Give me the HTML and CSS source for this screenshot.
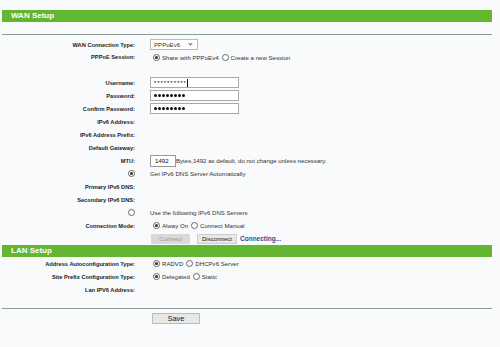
FILE: index.html
```html
<!DOCTYPE html>
<html>
<head>
<meta charset="UTF-8">
<title>WAN Setup</title>
<link rel="stylesheet" href="styles.css">
</head>
<body>
<div class="page">
  <!-- WAN -->
  <div class="bar">WAN Setup</div>
  <div class="rule top"></div>
  <div class="form">
    <div class="row"><div class="lbl">WAN Connection Type:</div><div class="val"><span class="select">PPPoEv6<i class="chev"></i></span></div></div>
    <div class="row short"><div class="lbl">PPPoE Session:</div><div class="val"><span class="radio on"></span>Share with PPPoEv4 <span class="radio"></span>Create a new Session</div></div>
    <div class="row"></div>
    <div class="row"><div class="lbl">Username:</div><div class="val"><span class="field stars">**********<b class="caret"></b></span></div></div>
    <div class="row"><div class="lbl">Password:</div><div class="val"><span class="field"><i class="dot"></i><i class="dot"></i><i class="dot"></i><i class="dot"></i><i class="dot"></i><i class="dot"></i><i class="dot"></i><i class="dot"></i></span></div></div>
    <div class="row"><div class="lbl">Confirm Password:</div><div class="val"><span class="field"><i class="dot"></i><i class="dot"></i><i class="dot"></i><i class="dot"></i><i class="dot"></i><i class="dot"></i><i class="dot"></i><i class="dot"></i></span></div></div>
    <div class="row"><div class="lbl">IPv6 Address:</div><div class="val"></div></div>
    <div class="row"><div class="lbl">IPv6 Address Prefix:</div><div class="val"></div></div>
    <div class="row"><div class="lbl">Default Gateway:</div><div class="val"></div></div>
    <div class="row"><div class="lbl">MTU:</div><div class="val"><span class="field mtu">1492</span>Bytes,1492 as default, do not change unless necessary.</div></div>
    <div class="row"><div class="lbl"><span class="radio on"></span></div><div class="val">Get IPv6 DNS Server Automatically</div></div>
    <div class="row"><div class="lbl">Primary IPv6 DNS:</div><div class="val"></div></div>
    <div class="row"><div class="lbl">Secondary IPv6 DNS:</div><div class="val"></div></div>
    <div class="row"><div class="lbl"><span class="radio"></span></div><div class="val">Use the following IPv6 DNS Servers</div></div>
    <div class="row"><div class="lbl">Connection Mode:</div><div class="val"><span class="radio on"></span>Alway On <span class="radio"></span>Connect Manual</div></div>
    <div class="row"><div class="lbl"></div><div class="val"><span class="btn off">Connect</span><span class="btn">Disconnect</span><span class="status">Connecting...</span></div></div>
  </div>
  <!-- LAN -->
  <div class="bar">LAN Setup</div>
  <div class="form">
    <div class="row"><div class="lbl">Address Autoconfiguration Type:</div><div class="val"><span class="radio on"></span>RADVD <span class="radio"></span>DHCPv6 Server</div></div>
    <div class="row"><div class="lbl">Site Prefix Configuration Type:</div><div class="val"><span class="radio on"></span>Delegated <span class="radio"></span>Static</div></div>
    <div class="row"><div class="lbl">Lan IPV6 Address:</div><div class="val"></div></div>
  </div>
  <div class="rule bottom"></div>
  <div class="foot"><span class="btn save">Save</span></div>
</div>
</body>
</html>
```
FILE: styles.css
```css
body {
	margin: 0;
	background-color: #f9fafb;
	font-family: "Liberation Sans", Arial, sans-serif;
	font-size: 6.1px;
	color: #333;
}
.page {
	width: 490px;
	padding: 10px 0 0 2px;
}
.bar {
	height: 12px;
	line-height: 12px;
	background-color: #63b62f;
	color: #fff;
	font-weight: bold;
	font-size: 8px;
	padding-left: 9px;
}
.rule {
	border-top: 1px solid #8a9c93;
}
.rule.top {
	margin: 12px 0 3px;
}
.rule.bottom {
	margin-top: 12px;
}
.row {
	display: grid;
	grid-template-columns: 133px 1fr;
	column-gap: 15px;
	align-items: center;
	height: 13px;
}
.row.short {
	height: 12px;
}
.lbl {
	text-align: right;
	font-weight: bold;
	font-size: 5.7px;
	color: #222;
}
.val {
	display: flex;
	align-items: center;
	white-space: nowrap;
}
/*单选按钮*/
.radio {
	display: inline-block;
	box-sizing: border-box;
	width: 7px;
	height: 7px;
	border: 1px solid #666;
	border-radius: 50%;
	background-color: #fff;
	margin: 0 2px 0 3px;
	position: relative;
}
.lbl .radio {
	margin: 0;
}
.radio.on::after {
	content: "";
	position: absolute;
	left: 1px;
	top: 1px;
	width: 3px;
	height: 3px;
	border-radius: 50%;
	background-color: #333;
}
.select {
	display: flex;
	align-items: center;
	box-sizing: border-box;
	width: 48px;
	height: 11px;
	border: 1px solid #b8b8b8;
	background-color: #fff;
	padding-left: 3px;
	position: relative;
}
.chev {
	position: absolute;
	right: 5px;
	top: 2px;
	width: 2px;
	height: 2px;
	border-right: 1px solid #666;
	border-bottom: 1px solid #666;
	transform: rotate(45deg);
}
.field {
	display: flex;
	align-items: center;
	box-sizing: border-box;
	width: 89px;
	height: 11px;
	border: 1px solid #a9a9a9;
	background-color: #fff;
	padding-left: 3px;
	color: #111;
}
.stars {
	letter-spacing: 0.9px;
}
.dot {
	display: inline-block;
	width: 3px;
	height: 3px;
	border-radius: 50%;
	background-color: #111;
	margin-right: 1px;
}
.caret {
	display: inline-block;
	width: 1px;
	height: 8px;
	background-color: #111;
}
.field.mtu {
	width: 26px;
	height: 12px;
	padding-left: 4px;
	border-color: #999;
}
.btn {
	display: inline-block;
	box-sizing: border-box;
	height: 10px;
	line-height: 8px;
	width: 39px;
	text-align: center;
	border: 1px solid #ccc;
	background-color: #e8e8e8;
	color: #222;
	margin-left: 1px;
}
.btn.off {
	background-color: #d9d9d9;
	color: #999;
	border-color: #d9d9d9;
}
.btn + .btn {
	margin-left: 7px;
	width: 40px;
}
.status {
	color: #2c4f8c;
	font-weight: bold;
	font-size: 6.5px;
	margin-left: 3px;
}
.foot {
	padding: 4px 0 0 149px;
}
.btn.save {
	width: 48px;
	height: 11px;
	line-height: 9px;
	font-size: 7.5px;
	border-color: #bbb;
}
```
